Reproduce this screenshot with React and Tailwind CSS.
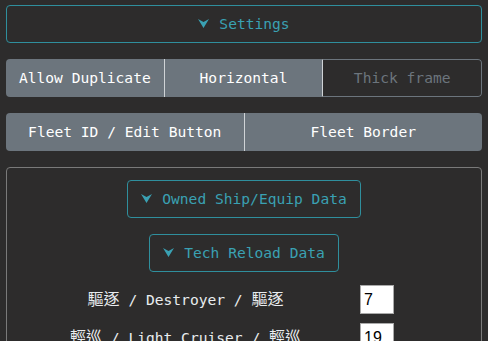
const mono = { fontFamily: '"DejaVu Sans Mono", "Noto Sans CJK TC", monospace' };

function Caret() {
  return (
    <svg width="11" height="9" viewBox="0 0 11 9" className="inline-block mr-[10px] -mt-[1px]" fill="currentColor">
      <path d="M0 0 L5.5 3 L11 0 L5.5 9 Z" />
    </svg>
  );
}

function Cjk({ children }) {
  return <span className="text-[16px]" style={{ fontFamily: '"Noto Sans CJK TC", sans-serif' }}>{children}</span>;
}

function Row({ a, b, c, value }) {
  return (
    <div className="flex items-center h-[38px]">
      <div className="w-[333px] text-center text-[#e9ecef] whitespace-nowrap">
        <Cjk>{a}</Cjk> / {b} / <Cjk>{c}</Cjk>
      </div>
      <div className="ml-[8px] w-[34px] h-[29px] bg-white border border-[#aaa] text-black text-[16px] leading-[27px] pl-[3px]" style={{ fontFamily: '"Liberation Sans", Arial, sans-serif' }}>
        {value}
      </div>
    </div>
  );
}

export default function App() {
  return (
    <div className="h-[341px] bg-[#2d2c2c] px-[6px] pt-[5px] text-[14.6px] leading-6 overflow-hidden" style={mono}>
      <button className="w-full h-[38px] border border-[#2f8f9d] rounded text-[#3aa1b3] flex items-center justify-center">
        <Caret />Settings
      </button>

      <div className="mt-[16px] flex h-[38px] rounded overflow-hidden">
        <div className="flex-1 bg-[#6c757d] text-white flex items-center justify-center">Allow Duplicate</div>
        <div className="flex-1 bg-[#6c757d] text-white flex items-center justify-center border-l border-[#cfd3d6]">Horizontal</div>
        <div className="flex-1 text-[#6c757d] flex items-center justify-center border border-[#6c757d] border-l-[#cfd3d6] rounded-r">Thick frame</div>
      </div>

      <div className="mt-[16px] flex h-[38px] rounded overflow-hidden">
        <div className="flex-1 bg-[#6c757d] text-white flex items-center justify-center">Fleet ID / Edit Button</div>
        <div className="flex-1 bg-[#6c757d] text-white flex items-center justify-center border-l border-[#cfd3d6]">Fleet Border</div>
      </div>

      <div className="mt-[16px] border border-[#7a7a7a] rounded px-3 pt-3 pb-4 flex flex-col items-center">
        <button className="h-[38px] px-[13px] border border-[#2f8f9d] rounded text-[#3aa1b3] flex items-center">
          <Caret />Owned Ship/Equip Data
        </button>
        <button className="mt-[16px] h-[38px] px-[13px] border border-[#2f8f9d] rounded text-[#3aa1b3] flex items-center">
          <Caret />Tech Reload Data
        </button>
        <div className="mt-[8px] self-stretch flex flex-col">
          <Row a="驅逐" b="Destroyer" c="驅逐" value="7" />
          <Row a="輕巡" b="Light Cruiser" c="輕巡" value="19" />
        </div>
      </div>
    </div>
  );
}
